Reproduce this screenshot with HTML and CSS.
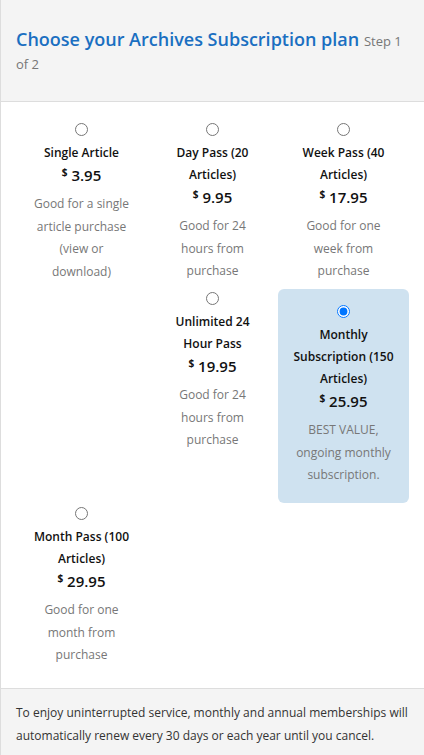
FILE: index.html
```html
<!DOCTYPE html>
<html lang="en">
<head>
<meta charset="utf-8">
<title>Choose your Archives Subscription plan</title>
<link rel="stylesheet" href="styles.css">
</head>
<body>
<div class="modal">
  <div class="modal-header">
    <h2 class="title"><span class="title-main">Choose your Archives Subscription plan</span> <span class="step">Step 1 of 2</span></h2>
  </div>
  <div class="plans">
    <label class="plan">
      <input type="radio" name="plan" class="radio">
      <span class="plan-name">Single Article</span>
      <span class="price"><sup>$</sup> 3.95</span>
      <span class="desc">Good for a single article purchase (view or download)</span>
    </label>
    <label class="plan">
      <input type="radio" name="plan" class="radio">
      <span class="plan-name">Day Pass (20 Articles)</span>
      <span class="price"><sup>$</sup> 9.95</span>
      <span class="desc">Good for 24 hours from purchase</span>
    </label>
    <label class="plan">
      <input type="radio" name="plan" class="radio">
      <span class="plan-name">Week Pass (40 Articles)</span>
      <span class="price"><sup>$</sup> 17.95</span>
      <span class="desc">Good for one week from purchase</span>
    </label>
    <label class="plan col-2">
      <input type="radio" name="plan" class="radio">
      <span class="plan-name">Unlimited 24 Hour Pass</span>
      <span class="price"><sup>$</sup> 19.95</span>
      <span class="desc">Good for 24 hours from purchase</span>
    </label>
    <label class="plan selected">
      <input type="radio" name="plan" class="radio" checked>
      <span class="plan-name">Monthly Subscription (150 Articles)</span>
      <span class="price"><sup>$</sup> 25.95</span>
      <span class="desc">BEST VALUE, ongoing monthly subscription.</span>
    </label>
    <label class="plan col-1">
      <input type="radio" name="plan" class="radio">
      <span class="plan-name">Month Pass (100 Articles)</span>
      <span class="price"><sup>$</sup> 29.95</span>
      <span class="desc">Good for one month from purchase</span>
    </label>
  </div>
  <div class="modal-footer">
    <p class="note">To enjoy uninterrupted service, monthly and annual memberships will automatically renew every 30 days or each year until you cancel.</p>
  </div>
</div>
</body>
</html>
```
FILE: styles.css
```css
html, body {
  margin: 0;
  padding: 0;
  background: #fff;
}
body {
  font-family: "Open Sans", "Noto Sans", sans-serif;
  color: #111;
}
.modal {
  width: 423px;
  border-left: 1px solid #ddd;
  background: #fff;
}
.modal-header {
  background: #f4f4f4;
  border-bottom: 1px solid #ddd;
  padding: 28px 14px 27px 15px;
}
.title {
  margin: 0;
  font-size: 18px;
  font-weight: 600;
  line-height: 23px;
  color: #1a6fc1;
}
.step {
  font-size: 13px;
  font-weight: 400;
  line-height: 16px;
  color: #777;
}
.plans {
  display: grid;
  grid-template-columns: repeat(3, 131px);
  padding: 18px 15px 16px;
  align-items: start;
}
.plan {
  display: flex;
  flex-direction: column;
  align-items: center;
  text-align: center;
  padding: 0 16px 5px;
  cursor: pointer;
}
.col-2 { grid-column: 2; }
.col-1 { grid-column: 1; }
.selected {
  background: #cfe2f0;
  border-radius: 6px;
  padding: 13px 10px 16px;
  margin-bottom: 1px;
}
.radio {
  width: 13px;
  height: 13px;
  margin: 3px 0 6px;
}
.plan-name {
  font-size: 12px;
  font-weight: 600;
  line-height: 22px;
  color: #111;
}
.price {
  font-size: 15px;
  font-weight: 600;
  line-height: 22px;
  color: #111;
}
.price sup {
  font-size: 10px;
  font-weight: 700;
  vertical-align: 5px;
  line-height: 0;
}
.desc {
  margin-top: 7px;
  font-size: 12px;
  line-height: 22.7px;
  color: #777;
}
.modal-footer {
  background: #f4f4f4;
  border-top: 1px solid #ddd;
  padding: 12px 15px 10px;
}
.note {
  margin: 0;
  font-size: 12px;
  line-height: 23px;
  color: #333;
}
```
